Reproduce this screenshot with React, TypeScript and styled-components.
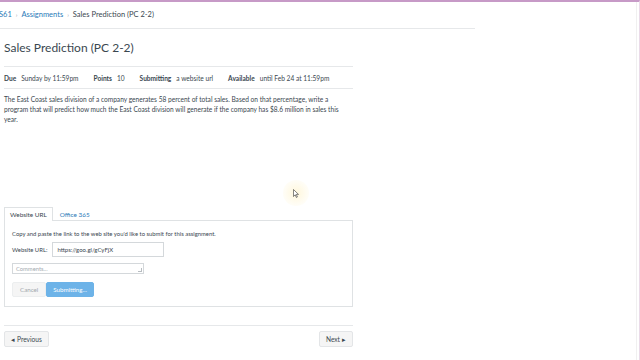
import styled, { createGlobalStyle } from 'styled-components';

const GlobalStyle = createGlobalStyle`
  html, body {
    margin: 0;
    padding: 0;
    background: #fff;
  }
  body {
    font-family: Lato, 'Open Sans', sans-serif;
    color: #2d3b45;
  }
`;

const TEXT = '#3a4750';
const LINK = '#2a7ab8';
const LINE = '#e6e8ea';

const Page = styled.div`
  width: 640px;
  height: 360px;
  overflow: hidden;
  box-sizing: border-box;
  border-top: 2px solid #c79ac7;
  border-right: 1px solid #eadbe9;
  display: flex;
`;

const Main = styled.div`
  width: 636px;
  border-right: 1px solid #f0f0f0;
  display: flex;
  flex-direction: column;
`;

const Header = styled.div`
  width: 475px;
  height: 27px;
  box-sizing: border-box;
  border-bottom: 1px solid ${LINE};
  display: flex;
  align-items: center;
  padding-bottom: 1px;
  overflow: hidden;
`;

const Crumbs = styled.nav`
  display: flex;
  align-items: center;
  gap: 4px;
  font-size: 7.5px;
  margin-left: -1px;
`;

const Crumb = styled.span<{ $link?: boolean }>`
  color: ${(p) => (p.$link ? LINK : TEXT)};
`;

const Sep = styled.span`
  color: #9aa3a9;
  font-size: 6px;
`;

const Content = styled.div`
  width: 349px;
  padding-left: 4px;
  display: flex;
  flex-direction: column;
`;

const Title = styled.h1`
  margin: 10px 0 0;
  font-size: 12px;
  font-weight: 400;
  line-height: 17px;
  color: ${TEXT};
`;

const Details = styled.div`
  margin-top: 10px;
  height: 21px;
  border-top: 1px solid ${LINE};
  border-bottom: 1px solid ${LINE};
  display: flex;
  align-items: center;
  gap: 15px;
  font-size: 6.6px;
  color: ${TEXT};
`;

const Detail = styled.div`
  display: flex;
  gap: 5px;
  > b {
    font-weight: 700;
  }
`;

const Description = styled.p`
  margin: 5px 0 0;
  font-size: 6.6px;
  line-height: 10px;
  color: ${TEXT};
`;

const Submission = styled.div`
  margin-top: 83px;
`;

const Tabs = styled.div`
  display: flex;
  height: 13px;
`;

const Tab = styled.div<{ $active?: boolean }>`
  font-size: 6.4px;
  padding: 0 5px;
  display: flex;
  align-items: center;
  box-sizing: border-box;
  height: ${(p) => (p.$active ? '14px' : '13px')};
  color: ${(p) => (p.$active ? TEXT : LINK)};
  border: 1px solid ${(p) => (p.$active ? '#dfe2e4' : 'transparent')};
  border-bottom: none;
  background: #fff;
  position: relative;
  z-index: 1;
  margin-left: ${(p) => (p.$active ? '0' : '1px')};
`;

const Panel = styled.div`
  border: 1px solid #dfe2e4;
  height: 87px;
  box-sizing: border-box;
  padding: 9px 7px;
  display: flex;
  flex-direction: column;
  font-size: 5.9px;
  color: ${TEXT};
`;

const FieldRow = styled.div`
  display: flex;
  align-items: center;
  gap: 5px;
  margin-top: 5px;
`;

const Input = styled.div`
  width: 112px;
  height: 15px;
  box-sizing: border-box;
  border: 1px solid #d4d8db;
  padding: 0 4px;
  display: flex;
  align-items: center;
  font-size: 6px;
`;

const Comments = styled.div`
  width: 132px;
  height: 13px;
  margin-top: 6px;
  box-sizing: border-box;
  border: 1px solid #d4d8db;
  padding: 0 3px;
  display: flex;
  align-items: center;
  color: #a4abb0;
  font-size: 5.8px;
  position: relative;
  &::after {
    content: '';
    position: absolute;
    right: 1px;
    bottom: 1px;
    width: 3px;
    height: 3px;
    border-right: 1px solid #b8bdc1;
    border-bottom: 1px solid #b8bdc1;
  }
`;

const Actions = styled.div`
  display: flex;
  margin-top: 8px;
`;

const Button = styled.div<{ $primary?: boolean }>`
  height: 15px;
  padding: 0 ${(p) => (p.$primary ? '6px' : '7px')};
  box-sizing: border-box;
  display: flex;
  align-items: center;
  font-size: 6.2px;
  border-radius: 2px;
  background: ${(p) => (p.$primary ? '#6db3e8' : '#f5f5f5')};
  color: ${(p) => (p.$primary ? '#fff' : '#a0a7ac')};
  border: 1px solid ${(p) => (p.$primary ? '#6db3e8' : '#eceeef')};
`;

const Footer = styled.div`
  margin-top: 18px;
  border-top: 1px solid ${LINE};
  padding-top: 5px;
  display: flex;
  justify-content: space-between;
`;

const NavButton = styled.div`
  height: 16px;
  padding: 0 6px;
  box-sizing: border-box;
  display: flex;
  align-items: center;
  gap: 2px;
  font-size: 6.6px;
  color: ${TEXT};
  background: #f5f5f5;
  border: 1px solid #e3e5e7;
  border-radius: 2px;
`;

const Cursor = styled.div`
  position: absolute;
  left: 283px;
  top: 180px;
  width: 26px;
  height: 26px;
  border-radius: 50%;
  background: radial-gradient(circle, rgba(255, 240, 190, 0.55) 0%, rgba(255, 245, 210, 0.25) 60%, rgba(255, 255, 255, 0) 100%);
  display: flex;
  align-items: center;
  justify-content: center;
`;

const Frame = styled.div`
  position: relative;
`;

export default function App() {
  return (
    <Frame>
      <GlobalStyle />
      <Page>
        <Main>
          <Header>
            <Crumbs>
              <Crumb $link>S61</Crumb>
              <Sep>›</Sep>
              <Crumb $link>Assignments</Crumb>
              <Sep>›</Sep>
              <Crumb>Sales Prediction (PC 2-2)</Crumb>
            </Crumbs>
          </Header>
          <Content>
            <Title>Sales Prediction (PC 2-2)</Title>
            <Details>
              <Detail>
                <b>Due</b>
                <span>Sunday by 11:59pm</span>
              </Detail>
              <Detail>
                <b>Points</b>
                <span>10</span>
              </Detail>
              <Detail>
                <b>Submitting</b>
                <span>a website url</span>
              </Detail>
              <Detail>
                <b>Available</b>
                <span>until Feb 24 at 11:59pm</span>
              </Detail>
            </Details>
            <Description>
              The East Coast sales division of a company generates 58 percent of total sales. Based on that
              percentage, write a program that will predict how much the East Coast division will generate if
              the company has $8.6 million in sales this year.
            </Description>
            <Submission>
              <Tabs>
                <Tab $active>Website URL</Tab>
                <Tab>Office 365</Tab>
              </Tabs>
              <Panel>
                <div>Copy and paste the link to the web site you'd like to submit for this assignment.</div>
                <FieldRow>
                  <span>Website URL:</span>
                  <Input>https://goo.gl/gCyFjX</Input>
                </FieldRow>
                <Comments>Comments...</Comments>
                <Actions>
                  <Button>Cancel</Button>
                  <Button $primary>Submitting...</Button>
                </Actions>
              </Panel>
            </Submission>
            <Footer>
              <NavButton>
                <span>◂</span>Previous
              </NavButton>
              <NavButton>
                Next<span>▸</span>
              </NavButton>
            </Footer>
          </Content>
        </Main>
      </Page>
      <Cursor>
        <svg width="6" height="9" viewBox="0 0 6 9">
          <path d="M0.5 0.5 L0.5 7.5 L2.2 5.8 L3.4 8.5 L4.4 8 L3.3 5.4 L5.5 5.4 Z" fill="#fff" stroke="#333" strokeWidth="0.6" />
        </svg>
      </Cursor>
    </Frame>
  );
}
